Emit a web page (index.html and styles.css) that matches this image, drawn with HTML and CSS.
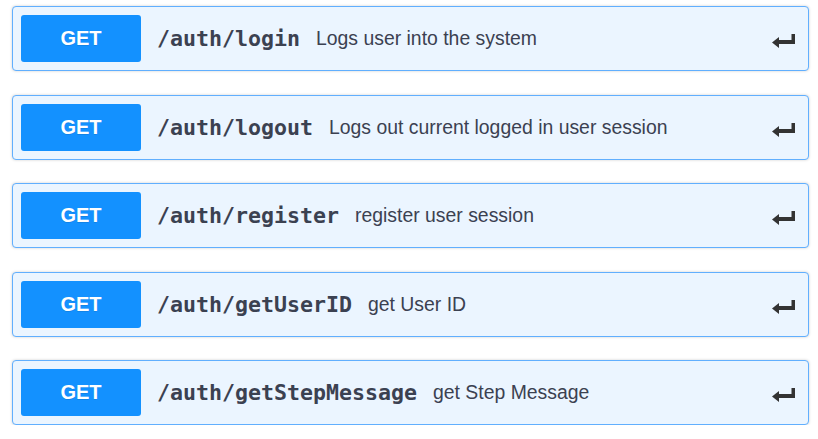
FILE: index.html
```html
<!DOCTYPE html>
<html>
<head>
<meta charset="utf-8">
<link rel="stylesheet" href="styles.css">
</head>
<body>
<div class="list">
  <div class="op">
    <span class="method">GET</span>
    <span class="path">/auth/login</span>
    <span class="desc">Logs user into the system</span>
    <svg class="arrow" width="24" height="14" viewBox="0 0 24 14"><polygon points="0,8.5 7,3 7,6 19.5,6 19.5,0 23,0 23,10 7,10 7,14" fill="#333"/></svg>
  </div>
  <div class="op">
    <span class="method">GET</span>
    <span class="path">/auth/logout</span>
    <span class="desc">Logs out current logged in user session</span>
    <svg class="arrow" width="24" height="14" viewBox="0 0 24 14"><polygon points="0,8.5 7,3 7,6 19.5,6 19.5,0 23,0 23,10 7,10 7,14" fill="#333"/></svg>
  </div>
  <div class="op">
    <span class="method">GET</span>
    <span class="path">/auth/register</span>
    <span class="desc">register user session</span>
    <svg class="arrow" width="24" height="14" viewBox="0 0 24 14"><polygon points="0,8.5 7,3 7,6 19.5,6 19.5,0 23,0 23,10 7,10 7,14" fill="#333"/></svg>
  </div>
  <div class="op">
    <span class="method">GET</span>
    <span class="path">/auth/getUserID</span>
    <span class="desc">get User ID</span>
    <svg class="arrow" width="24" height="14" viewBox="0 0 24 14"><polygon points="0,8.5 7,3 7,6 19.5,6 19.5,0 23,0 23,10 7,10 7,14" fill="#333"/></svg>
  </div>
  <div class="op">
    <span class="method">GET</span>
    <span class="path">/auth/getStepMessage</span>
    <span class="desc">get Step Message</span>
    <svg class="arrow" width="24" height="14" viewBox="0 0 24 14"><polygon points="0,8.5 7,3 7,6 19.5,6 19.5,0 23,0 23,10 7,10 7,14" fill="#333"/></svg>
  </div>
</div>
</body>
</html>
```
FILE: styles.css
```css
html, body {
  margin: 0;
  padding: 0;
  background: #fff;
}
.list {
  padding: 6px 9px 0 12px;
  display: flex;
  flex-direction: column;
  gap: 23.5px;
}
.op {
  box-sizing: border-box;
  height: 65px;
  display: flex;
  align-items: center;
  padding: 0 12px 0 8px;
  background: #ebf5ff;
  border: 1px solid #61affe;
  border-radius: 4px;
  box-shadow: 0 0 3px rgba(0,0,0,0.19);
}
.method {
  width: 120px;
  height: 47px;
  flex: none;
  display: flex;
  align-items: center;
  justify-content: center;
  background: #1391ff;
  color: #fff;
  border-radius: 3px;
  font-family: "Liberation Sans", Arial, sans-serif;
  font-weight: bold;
  font-size: 20px;
  text-shadow: 0 1px 0 rgba(0,0,0,0.1);
}
.path {
  margin-left: 16px;
  font-family: "DejaVu Sans Mono", monospace;
  font-weight: bold;
  font-size: 21.6px;
  color: #3b4151;
}
.desc {
  margin-left: 16px;
  font-family: "Liberation Sans", Arial, sans-serif;
  font-size: 19.4px;
  color: #3b4151;
  flex: 1;
}
.arrow {
  flex: none;
  margin-top: 5px;
}
```
